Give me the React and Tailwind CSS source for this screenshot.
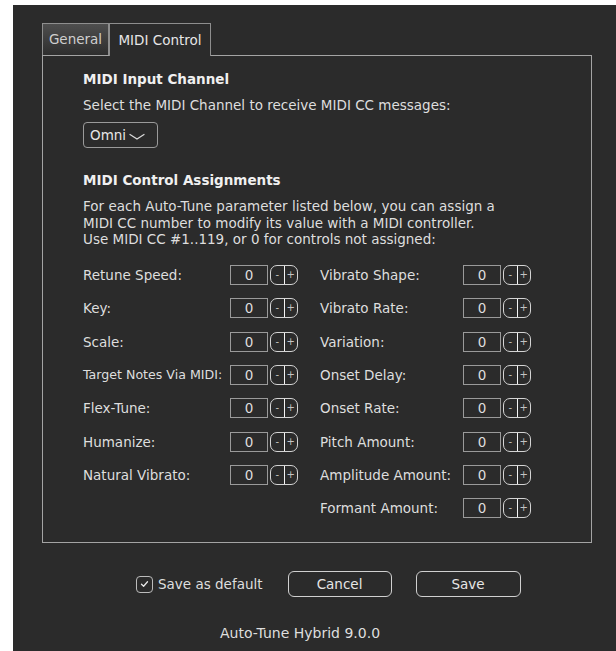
import React from 'react';

const leftParams = [
	'Retune Speed:',
	'Key:',
	'Scale:',
	'Target Notes Via MIDI:',
	'Flex-Tune:',
	'Humanize:',
	'Natural Vibrato:',
];

const rightParams = [
	'Vibrato Shape:',
	'Vibrato Rate:',
	'Variation:',
	'Onset Delay:',
	'Onset Rate:',
	'Pitch Amount:',
	'Amplitude Amount:',
	'Formant Amount:',
];

const Stepper = () => (
	<div className="ml-[2px] flex h-[20px] w-[28px] overflow-hidden rounded-[7px] border-[1.5px] border-[#d4d4d4]">
		<button
			type="button"
			className="flex flex-1 items-center justify-center border-r-[1.5px] border-[#f4f4f4] text-[10px] leading-none text-[#c4c4c4]">
			-
		</button>
		<button
			type="button"
			className="flex flex-1 items-center justify-center text-[10px] leading-none text-[#c4c4c4]">
			+
		</button>
	</div>
);

const CcRow = ({ label, labelWidth }) => (
	<div className="flex h-[33.3px] items-center">
		<span
			className={
				label.length > 20 ? 'shrink-0 text-[12.6px]' : 'shrink-0 text-[13.5px]'
			}
			style={{ width: labelWidth }}>
			{label}
		</span>
		<div className="flex h-[20px] w-[38px] items-center justify-center border border-[#9a9a9a] text-[13.5px]">
			0
		</div>
		<Stepper />
	</div>
);

export default function App() {
	return (
		<div className="h-[651px] w-[616px] overflow-hidden bg-white pl-[13px] pt-[5px] font-['DejaVu_Sans',sans-serif] text-[#dedede]">
			<div className="h-full bg-[#2b2b2b] pl-[29px] pt-[18px]">
				{/* tab strip */}
				<div className="flex h-[32px] items-stretch">
					<div className="flex w-[67px] items-center justify-center border border-b-0 border-[#8e8e8e] bg-gradient-to-b from-[#4e4e4e] to-[#2e2e2e] text-[13.5px] text-[#cfcfcf]">
						General
					</div>
					<div className="relative z-10 -mb-px flex h-[33px] w-[102px] items-center justify-center border border-b-0 border-[#8e8e8e] bg-[#2b2b2b] text-[13.5px] text-[#e6e6e6]">
						MIDI Control
					</div>
				</div>

				{/* tab body */}
				<div className="box-border h-[488px] w-[550px] border border-[#a4a4a4] pl-[40px] pt-[14px]">
					<h3 className="text-[13.5px] font-bold leading-[18px] text-[#f0f0f0]">
						MIDI Input Channel
					</h3>
					<p className="mt-[8px] text-[13.5px] leading-[18px]">
						Select the MIDI Channel to receive MIDI CC messages:
					</p>
					<button
						type="button"
						className="mt-[8px] flex h-[26px] w-[75px] items-center rounded-[4px] border border-[#9a9a9a] pl-[6px] text-[13.5px] text-[#e6e6e6]">
						Omni
						<svg width="16" height="8" viewBox="0 0 16 8" className="ml-[3px] mt-[3px]">
							<polyline
								points="1,1.5 8,6 15,1.5"
								fill="none"
								stroke="#d8d8d8"
								strokeWidth="1.3"
								strokeLinecap="round"
							/>
						</svg>
					</button>

					<h3 className="mt-[23px] text-[13.5px] font-bold leading-[18px] text-[#f0f0f0]">
						MIDI Control Assignments
					</h3>
					<p className="mt-[9px] text-[13.5px] leading-[16.5px]">
						For each Auto-Tune parameter listed below, you can assign a
						<br />
						MIDI CC number to modify its value with a MIDI controller.
						<br />
						Use MIDI CC #1..119, or 0 for controls not assigned:
					</p>

					<div className="mt-[11px] grid grid-cols-[237px_auto]">
						<div className="flex flex-col">
							{leftParams.map((label) => (
								<CcRow key={label} label={label} labelWidth={147} />
							))}
						</div>
						<div className="flex flex-col">
							{rightParams.map((label) => (
								<CcRow key={label} label={label} labelWidth={143} />
							))}
						</div>
					</div>
				</div>

				{/* footer */}
				<div className="mt-[28px] flex h-[26px] items-center pl-[94px]">
					<div className="flex h-[17px] w-[17px] items-center justify-center rounded-[4px] border border-[#bcbcbc]">
						<svg width="9" height="8" viewBox="0 0 9 8">
							<polyline
								points="1.5,4.2 3.6,6.2 7.5,1.8"
								fill="none"
								stroke="#e8e8e8"
								strokeWidth="1.3"
								strokeLinecap="round"
								strokeLinejoin="round"
							/>
						</svg>
					</div>
					<span className="ml-[5px] text-[13.5px]">Save as default</span>
					<button
						type="button"
						className="ml-[25px] h-[26px] w-[104px] rounded-[6px] border border-[#d0d0d0] text-[13.5px] text-[#e6e6e6]">
						Cancel
					</button>
					<button
						type="button"
						className="ml-[24px] h-[26px] w-[105px] rounded-[6px] border border-[#d0d0d0] text-[13.5px] text-[#e6e6e6]">
						Save
					</button>
				</div>

				<p className="mt-[27px] pl-[178px] text-[14px] leading-[18px]">
					Auto-Tune Hybrid 9.0.0
				</p>
			</div>
		</div>
	);
}
